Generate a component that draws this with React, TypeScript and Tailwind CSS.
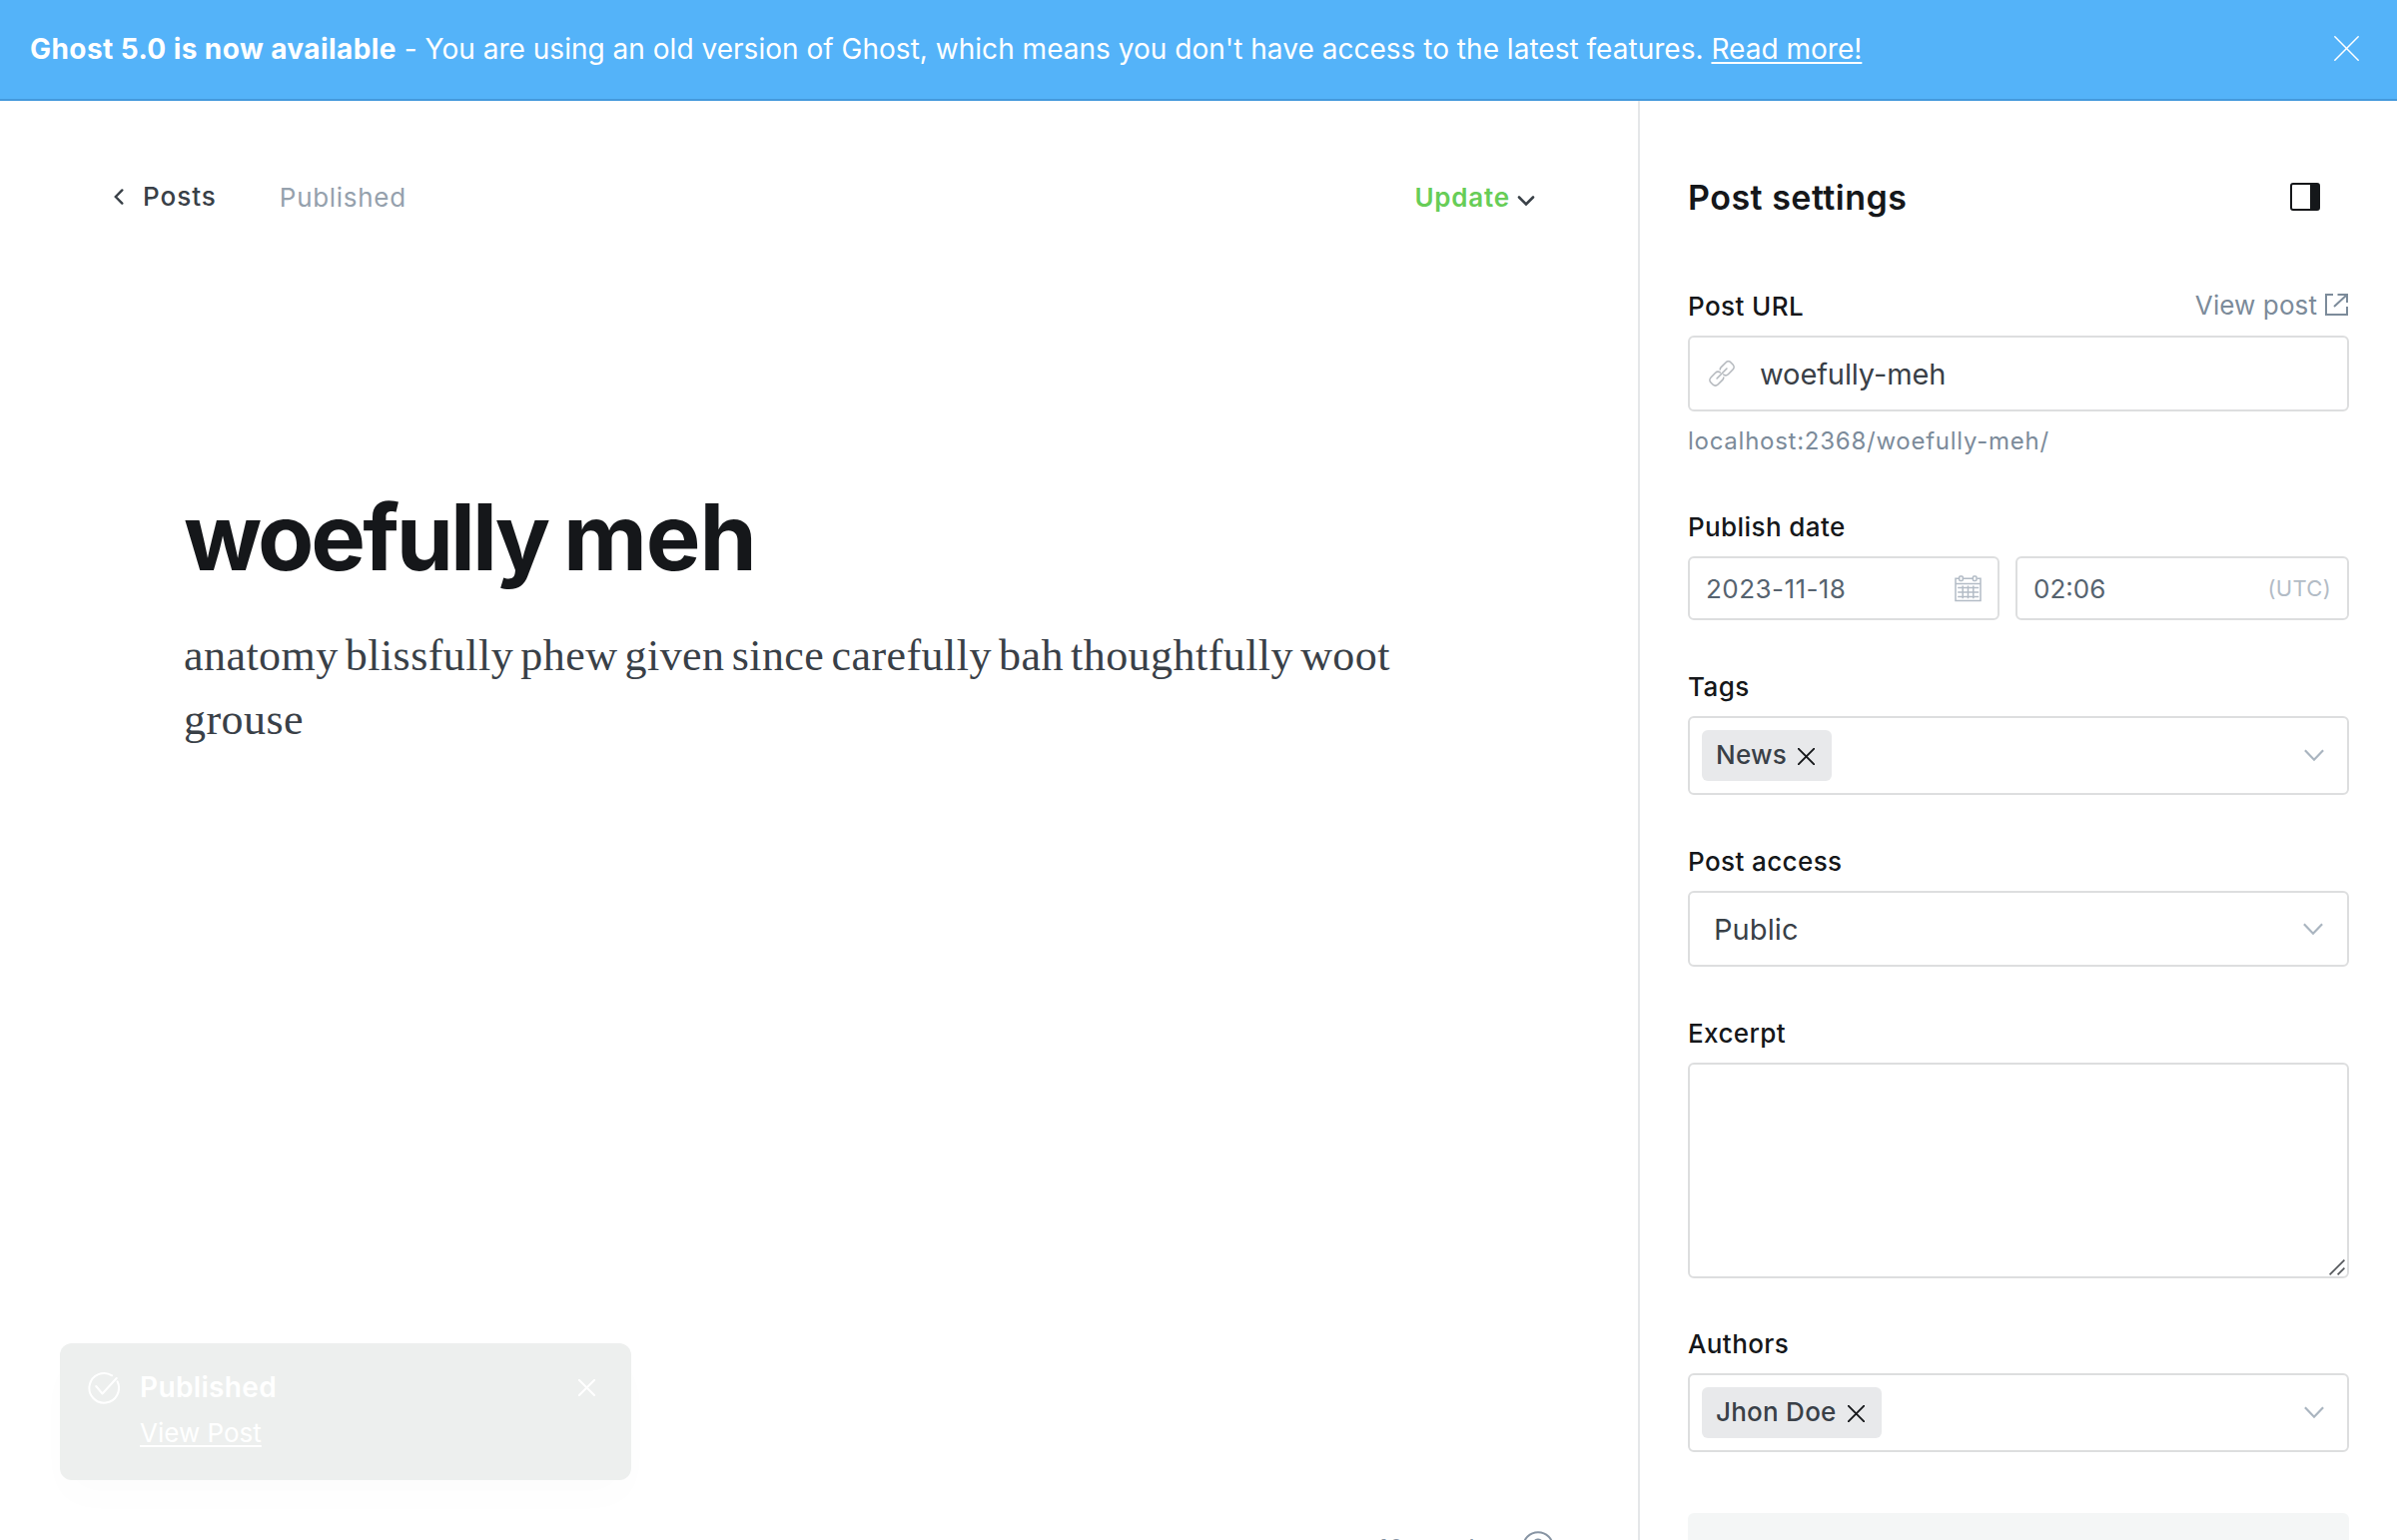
import type { ReactNode } from "react";

function Cross({ size, stroke, className }: { size: number; stroke: number; className?: string }) {
  return (
    <svg width={size} height={size} viewBox="0 0 24 24" fill="none" stroke="currentColor" className={className}>
      <path d="M.8.8l22.4 22.4M23.2.8L.8 23.2" strokeWidth={(stroke * 24) / size} strokeLinecap="round" />
    </svg>
  );
}

function Chevron({ className }: { className?: string }) {
  return (
    <svg width="20" height="13" viewBox="0 0 20 13" fill="none" stroke="#aab5c0" strokeWidth="2.2" className={className}>
      <path d="M.9 1.2L10 10.7 19.1 1.2" />
    </svg>
  );
}

function LinkIcon() {
  return (
    <svg width="28" height="28" viewBox="-14 -14 28 28" fill="none" stroke="#b5b9be" strokeWidth="1.6" strokeLinecap="round">
      <g transform="rotate(-45)">
        <path d="M1.6 -4.1C2.3 -4.8 3 -5 4 -5h6.6a3.6 3.6 0 0 1 3.6 3.6v2.8a3.6 3.6 0 0 1 -3.6 3.6H4A3.6 3.6 0 0 1 .5 2" />
        <path d="M-1.6 4.1C-2.3 4.8 -3 5 -4 5h-6.6a3.6 3.6 0 0 1 -3.6 -3.6v-2.8a3.6 3.6 0 0 1 3.6 -3.6H-4A3.6 3.6 0 0 1 -.5 -2" />
        <path d="M-7 0H7" />
      </g>
    </svg>
  );
}

function ExternalIcon() {
  return (
    <svg width="23" height="22" viewBox="0 0 23 22" fill="none" stroke="#7c8b9a" strokeWidth="2">
      <path d="M8 1H1v20h21v-8M12.5 1H22v8M9 13L22 1" />
    </svg>
  );
}

function CalendarIcon() {
  return (
    <svg width="27" height="27" viewBox="0 0 27 27" fill="none" stroke="#b3bcc6" strokeWidth="1.5">
      <path d="M4.5 3.2H1v22.2h25V3.2h-3.5M8.5 3.2h10M1 8.6h25" />
      <rect x="4.7" y="1" width="3.6" height="4.6" rx="1" />
      <rect x="18.4" y="1" width="3.6" height="4.6" rx="1" />
      <path d="M3.2 12.4h21M3.2 17h21M3.2 21.6h21M8.2 10.4v12.8M13.5 10.4v12.8M18.8 10.4v12.8" />
    </svg>
  );
}

function Field({ label, aside, className, children }: { label: string; aside?: ReactNode; className: string; children: ReactNode }) {
  return (
    <section className={className}>
      <div className="mb-[17px] flex h-6 items-center justify-between">
        <h4 className="text-[26px] leading-6 font-medium tracking-[0.4px] text-[#15171a]">{label}</h4>
        {aside}
      </div>
      {children}
    </section>
  );
}

function TokenBox({ token }: { token: string }) {
  return (
    <div className="flex h-[79px] items-center justify-between rounded-md border-2 border-[#dddedf] pr-[23px] pl-3">
      <span className="flex h-[51px] items-center rounded-md bg-[#e8e9eb] pr-[17px] pl-[14px] text-[26px] font-medium tracking-[0.25px] text-[#394047]">
        <span className="pb-0.5">{token}</span>
        <Cross size={17} stroke={1.9} className="mt-0.5 ml-[11px] text-[#15171a]" />
      </span>
      <Chevron />
    </div>
  );
}

export default function App() {
  return (
    <div className="relative h-[1542px] w-[2400px] overflow-hidden bg-white font-['Inter',sans-serif]">
      <div className="flex h-[101px] items-center justify-between border-b-2 border-[#4499dc] bg-[#54b3f9] pr-[38px] pl-[30px] text-[28px] text-white">
        <p className="pb-px whitespace-pre">
          <strong className="font-bold tracking-[0.42px]">Ghost 5.0 is now available</strong>
          <span className="tracking-[0.02px]">
            {" - You are using an old version of Ghost, which means you don't have access to the latest features. "}
            <a className="underline decoration-2 underline-offset-[3px]">Read more!</a>
          </span>
        </p>
        <Cross size={25} stroke={1.5} className="mb-[3px]" />
      </div>

      <div className="flex h-[1441px]">
        <main className="w-[1640px] shrink-0">
          <header className="flex h-[192px] items-center pr-[103px] pl-[114px] text-[26px]">
            <svg width="10" height="16" viewBox="0 0 10 16" fill="none" stroke="#394047" strokeWidth="2.4" strokeLinecap="round">
              <path d="M8.3 1.4L1.8 8l6.5 6.6" />
            </svg>
            <span className="ml-[19px] pb-px font-medium tracking-[1px] text-[#394047]">Posts</span>
            <span className="ml-[63px] tracking-[0.7px] text-[#95a1ad]">Published</span>
            <span className="ml-auto font-semibold tracking-[0.8px] text-[#67cd57]">Update</span>
            <svg width="18" height="10" viewBox="0 0 18 10" fill="none" stroke="#394047" strokeWidth="2.6" strokeLinecap="round" className="mt-[7px] ml-[7px]">
              <path d="M2 1.5l7 7 7-7" />
            </svg>
          </header>

          <article className="h-[1238px] pt-[192px] pl-[184px]">
            <h1 className="text-[92px] leading-[105px] font-bold tracking-[-3px] [word-spacing:-3px] text-[#15171a]">
              woefully <span className="tracking-[-1.2px]">meh</span>
            </h1>
            <p className="mt-[35px] w-[1240px] font-['Liberation_Serif',serif] text-[44px] leading-[64px] tracking-[0.45px] [word-spacing:-4.3px] text-[#394047]">
              anatomy blissfully phew given since carefully bah thoughtfully woot grouse
            </p>
          </article>

          <footer className="flex h-[38px] items-center justify-end pr-[84px] text-[26px] tracking-[0.3px] text-[#8794a3]">
            <span>10 words</span>
            <svg width="32" height="32" viewBox="0 0 32 32" fill="none" stroke="currentColor" strokeWidth="2" strokeLinecap="round" className="mb-[3px] ml-[33px]">
              <circle cx="16" cy="16" r="14.8" />
              <path d="M12 12.5a4 4 0 1 1 5.5 3.7c-1 .4-1.5 1-1.5 2v1.3M16 23.4v.2" />
            </svg>
          </footer>
        </main>

        <aside className="w-[760px] shrink-0 border-l-2 border-[#e5e7e9] px-12">
          <header className="flex h-[194px] items-center justify-between pr-[29px]">
            <h2 className="pb-0.5 text-[34px] font-semibold tracking-[0.5px] text-[#15171a]">Post settings</h2>
            <svg width="30" height="28" viewBox="0 0 30 28" className="mb-0.5">
              <rect x="1" y="1" width="28" height="26" rx="2" fill="none" stroke="#15171a" strokeWidth="2" />
              <path d="M20 1h7.5A1.5 1.5 0 0 1 29 2.5v23a1.5 1.5 0 0 1-1.5 1.5H20z" fill="#15171a" />
            </svg>
          </header>

          <Field
            label="Post URL"
            className=""
            aside={
              <a className="mb-1 flex items-center gap-2 pr-px text-[26px] leading-6 tracking-[0.1px] text-[#7c8b9a]">
                <span className="pt-px">View post</span>
                <ExternalIcon />
              </a>
            }
          >
            <div className="flex h-[76px] items-center rounded-md border-2 border-[#dddedf] pl-[18px] text-[29px] tracking-[-0.1px] text-[#394047]">
              <LinkIcon />
              <span className="ml-6 pt-0.5">woefully-meh</span>
            </div>
            <p className="mt-[17px] mb-[-1px] text-2xl leading-[26px] tracking-[0.74px] text-[#7c8b9a]">localhost:2368/woefully-meh/</p>
          </Field>

          <Field label="Publish date" className="mt-[62px]">
            <div className="flex gap-4 text-[26px] text-[#56636f]">
              <div className="flex h-16 w-[312px] items-center justify-between rounded-md border-2 border-[#dddedf] pr-4 pl-4 tracking-[0.45px]">
                <span>2023-11-18</span>
                <CalendarIcon />
              </div>
              <div className="flex h-16 grow items-center justify-between rounded-md border-2 border-[#dddedf] pr-4 pl-4">
                <span>02:06</span>
                <span className="text-[22px] tracking-[0.3px] text-[#b3bcc6]">(UTC)</span>
              </div>
            </div>
          </Field>

          <Field label="Tags" className="mt-[55px]">
            <TokenBox token="News" />
          </Field>

          <Field label="Post access" className="mt-[55px]">
            <div className="flex h-[76px] items-center justify-between rounded-md border-2 border-[#dddedf] pr-6 pl-6 text-[29px] tracking-[0.1px] text-[#394047]">
              <span className="pt-0.5">Public</span>
              <Chevron />
            </div>
          </Field>

          <Field label="Excerpt" className="mt-[55px]">
            <div className="flex h-[216px] items-end justify-end rounded-md border-2 border-[#dddedf] pr-0.5 pb-px">
              <svg width="16" height="16" viewBox="0 0 16 16" fill="none" stroke="#55585c" strokeWidth="1.7">
                <path d="M.6 15.4L15.4.6M8.6 15.4l6.8-6.8" />
              </svg>
            </div>
          </Field>

          <Field label="Authors" className="mt-[54px]">
            <TokenBox token="Jhon Doe" />
          </Field>

          <div className="mt-[61px] h-[80px] rounded-t-md bg-[#f4f6f6] pt-5 pl-[18px] text-[29px] leading-[35px] font-medium text-[#15171a]">
            Meta data
          </div>
        </aside>
      </div>

      <div className="absolute top-[1345px] left-[60px] flex h-[137px] w-[572px] items-start rounded-xl bg-[#edefee] pt-[27px] pr-[36px] pl-7 text-white shadow-[0_20px_40px_rgba(0,0,0,0.012)]">
        <svg width="32" height="34" viewBox="0 0 32 34" fill="none" stroke="currentColor" strokeWidth="2" strokeLinecap="round" strokeLinejoin="round">
          <path d="M24.1 5.3A14.8 14.8 0 1 0 29.5 11.3M8.2 16L14.5 23.5 28.7 8" />
        </svg>
        <div className="ml-[20px] flex flex-col">
          <span className="text-[28px] leading-[34px] font-semibold tracking-[0.35px]">Published</span>
          <a className="mt-3 self-start text-[26px] leading-[34px] underline decoration-2 underline-offset-[3px]">View Post</a>
        </div>
        <Cross size={17} stroke={2} className="mt-[9px] ml-auto" />
      </div>
    </div>
  );
}
